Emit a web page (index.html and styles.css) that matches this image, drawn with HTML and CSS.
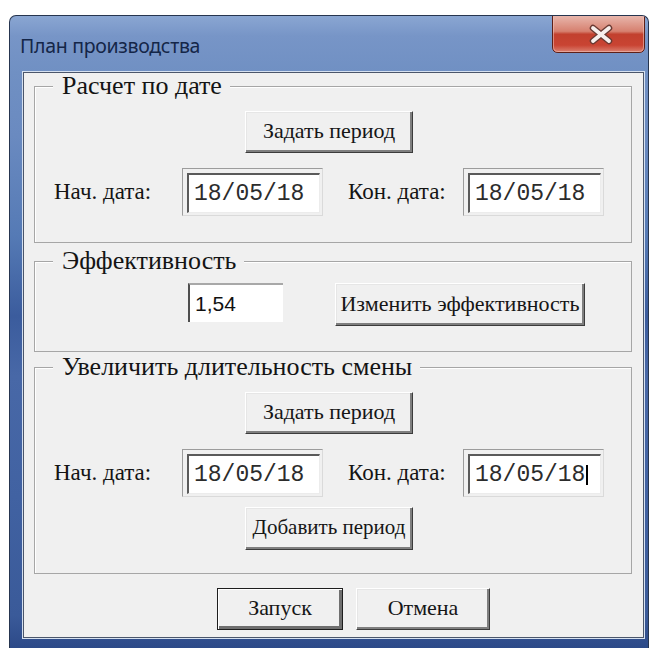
FILE: index.html
```html
<!DOCTYPE html>
<html lang="ru">
<head>
<meta charset="utf-8">
<title>План производства</title>
<link rel="stylesheet" href="styles.css">
</head>
<body>
<div class="window">
  <div class="titlebar">
    <span class="title">План производства</span>
    <span class="close" aria-label="Закрыть">
      <svg width="93" height="37" viewBox="0 0 93 37">
        <defs>
          <linearGradient id="closeFill" x1="0" y1="0" x2="0" y2="1">
            <stop offset="0" stop-color="#e8b6ac"/>
            <stop offset="0.42" stop-color="#d6806f"/>
            <stop offset="0.5" stop-color="#c2402e"/>
            <stop offset="0.8" stop-color="#c94433"/>
            <stop offset="1" stop-color="#dc8474"/>
          </linearGradient>
        </defs>
        <path d="M0.5 0 V31 Q0.5 36.5 6 36.5 H87 Q92.5 36.5 92.5 31 V0" fill="url(#closeFill)" stroke="#5e2018" stroke-width="1"/>
        <path d="M1.5 1 V31 Q1.5 35.5 6 35.5 H87 Q91.5 35.5 91.5 31 V1" fill="none" stroke="#f0c6bd" stroke-opacity="0.55" stroke-width="1"/>
        <path d="M41 12 L57 25 M57 12 L41 25" stroke="#6a3a33" stroke-width="6.5" stroke-linecap="round"/>
        <path d="M41 12 L57 25 M57 12 L41 25" stroke="#f7efed" stroke-width="3.8" stroke-linecap="round"/>
      </svg>
    </span>
  </div>

  <div class="client">
    <fieldset class="group group-dates">
      <legend>Расчет по дате</legend>
      <div class="center-row"><span class="btn btn-period">Задать период</span></div>
      <div class="date-row">
        <span class="lbl lbl-start">Нач. дата:</span>
        <span class="date-box"><span class="date">18/05/18</span></span>
        <span class="lbl lbl-end">Кон. дата:</span>
        <span class="date-box"><span class="date">18/05/18</span></span>
      </div>
    </fieldset>

    <fieldset class="group group-eff">
      <legend>Эффективность</legend>
      <div class="eff-row">
        <span class="num-box">1,54</span>
        <span class="btn btn-eff">Изменить эффективность</span>
      </div>
    </fieldset>

    <fieldset class="group group-shift">
      <legend>Увеличить длительность смены</legend>
      <div class="center-row"><span class="btn btn-period">Задать период</span></div>
      <div class="date-row date-row-shift">
        <span class="lbl lbl-start">Нач. дата:</span>
        <span class="date-box"><span class="date">18/05/18</span></span>
        <span class="lbl lbl-end">Кон. дата:</span>
        <span class="date-box"><span class="date">18/05/18<span class="caret"></span></span></span>
      </div>
      <div class="center-row add-row"><span class="btn btn-period btn-add">Добавить период</span></div>
    </fieldset>

    <div class="footer">
      <span class="btn btn-default btn-run">Запуск</span>
      <span class="btn btn-cancel">Отмена</span>
    </div>
  </div>
</div>
</body>
</html>
```

FILE: styles.css
```css
* {
  box-sizing: border-box;
}

html, body {
  margin: 0;
  padding: 0;
  background: #ffffff;
}

body {
  font-family: "Liberation Serif", "Times New Roman", serif;
  color: #141414;
}

/* Window frame */
.window {
  margin: 15px 0 0 9px;
  width: 640px;
  height: 633px;
  border: 1px solid #26354f;
  border-bottom: none;
  border-radius: 7px 7px 0 0;
  background: linear-gradient(180deg,
    #8aa6d2 0px,
    #7795c7 20px,
    #7090c3 56px,
    #6a8ac0 120px,
    #557ab5 220px,
    #3b5c9d 300px,
    #4868a7 360px,
    #4162a2 480px,
    #3a5a99 600px,
    #2c4a88 632px);
  display: flex;
  flex-direction: column;
  overflow: hidden;
}

.titlebar {
  height: 56px;
  display: flex;
  align-items: center;
  padding-left: 10px;
}

.title {
  font-family: "Noto Sans", "Open Sans", sans-serif;
  font-size: 19.5px;
  color: #142648;
  letter-spacing: -0.3px;
  padding-top: 2px;
}

.close {
  margin-left: auto;
  margin-right: 3px;
  align-self: flex-start;
  width: 93px;
  height: 37px;
  display: block;
}

.close svg {
  display: block;
}

/* Client area */
.client {
  margin: 0 4px 0 13px;
  height: 566px;
  background: #f0f0f0;
  border: 1px solid #4b566b;
  box-shadow: 0 0 0 1px #d6e1f0;
  display: flex;
  flex-direction: column;
}

/* Group boxes */
.group {
  margin: 0 11px 0 10px;
  padding: 0;
  min-inline-size: 0;
  border: 1px solid #a6a6a6;
  box-shadow: inset 1px 1px 0 #ffffff;
}

.group legend {
  margin-left: 18px;
  padding: 0 8px 0 9px;
  font-size: 26px;
  line-height: 26px;
  background: #f0f0f0;
}

.group-dates {
  padding-bottom: 26px;
}

.group-eff {
  margin-top: 5px;
  padding-bottom: 25px;
}

.group-shift {
  margin-top: 2px;
  padding-bottom: 23px;
}

.center-row {
  display: flex;
  padding-left: 210px;
  margin-top: 12px;
}

.add-row {
  margin-top: 10px;
}

/* Buttons */
.btn {
  display: flex;
  align-items: center;
  justify-content: center;
  height: 42px;
  background: #f0f0f0;
  border-style: solid;
  border-width: 1px;
  border-color: #ffffff #3c3c3c #3c3c3c #ffffff;
  box-shadow: inset -2px -2px 0 #7f7f7f, inset 1px 1px 0 #e6e6e6;
  font-size: 22px;
  white-space: nowrap;
  color: #161616;
  padding-bottom: 2px;
}

.btn-period {
  width: 168px;
}

.btn-add {
  font-size: 21px;
  height: 43px;
}

.btn-eff {
  width: 250px;
  height: 43px;
  margin-left: 52px;
}

.btn-default {
  border: 1px solid #1e1e1e;
  box-shadow: inset 1px 1px 0 #ffffff, inset -3px -3px 0 #6f6f6f, inset -2px -2px 0 #3a3a3a;
}

.btn-run {
  width: 126px;
}

.btn-cancel {
  width: 134px;
  margin-left: 13px;
}

/* Date rows */
.date-row {
  display: flex;
  align-items: center;
  height: 48px;
  margin-top: 15px;
}

.date-row-shift {
  margin-top: 15px;
}

.lbl {
  font-size: 23px;
  white-space: nowrap;
}

.lbl-start {
  width: 147px;
  padding-left: 19px;
}

.lbl-end {
  width: 140px;
  padding-left: 25px;
}

.date-box {
  display: block;
  width: 141px;
  height: 48px;
  border: 1px solid;
  border-color: #9c9c9c #dadada #dadada #9c9c9c;
  padding: 4px 2px 2px 4px;
}

.date {
  display: flex;
  align-items: center;
  height: 100%;
  background: #ffffff;
  border-top: 2px solid #5a5a5a;
  border-left: 2px solid #5a5a5a;
  border-right: 1px solid #ececec;
  border-bottom: 1px solid #ececec;
  padding-left: 5px;
  font-family: "Liberation Mono", "Courier New", monospace;
  font-size: 23px;
  color: #2c2c2c;
}

.caret {
  display: inline-block;
  width: 2px;
  height: 20px;
  background: #000000;
  margin-left: 1px;
}

/* Efficiency row */
.eff-row {
  display: flex;
  align-items: flex-start;
  margin-top: 9px;
  padding-left: 153px;
}

.num-box {
  display: flex;
  align-items: center;
  width: 95px;
  height: 39px;
  background: #ffffff;
  border-top: 2px solid #a8a8a8;
  border-left: 2px solid #4e4e4e;
  padding-left: 5px;
  font-family: "Liberation Sans", Arial, sans-serif;
  font-size: 21px;
  color: #111111;
}

/* Footer */
.footer {
  display: flex;
  margin-top: 14px;
  padding-left: 193px;
}
```
